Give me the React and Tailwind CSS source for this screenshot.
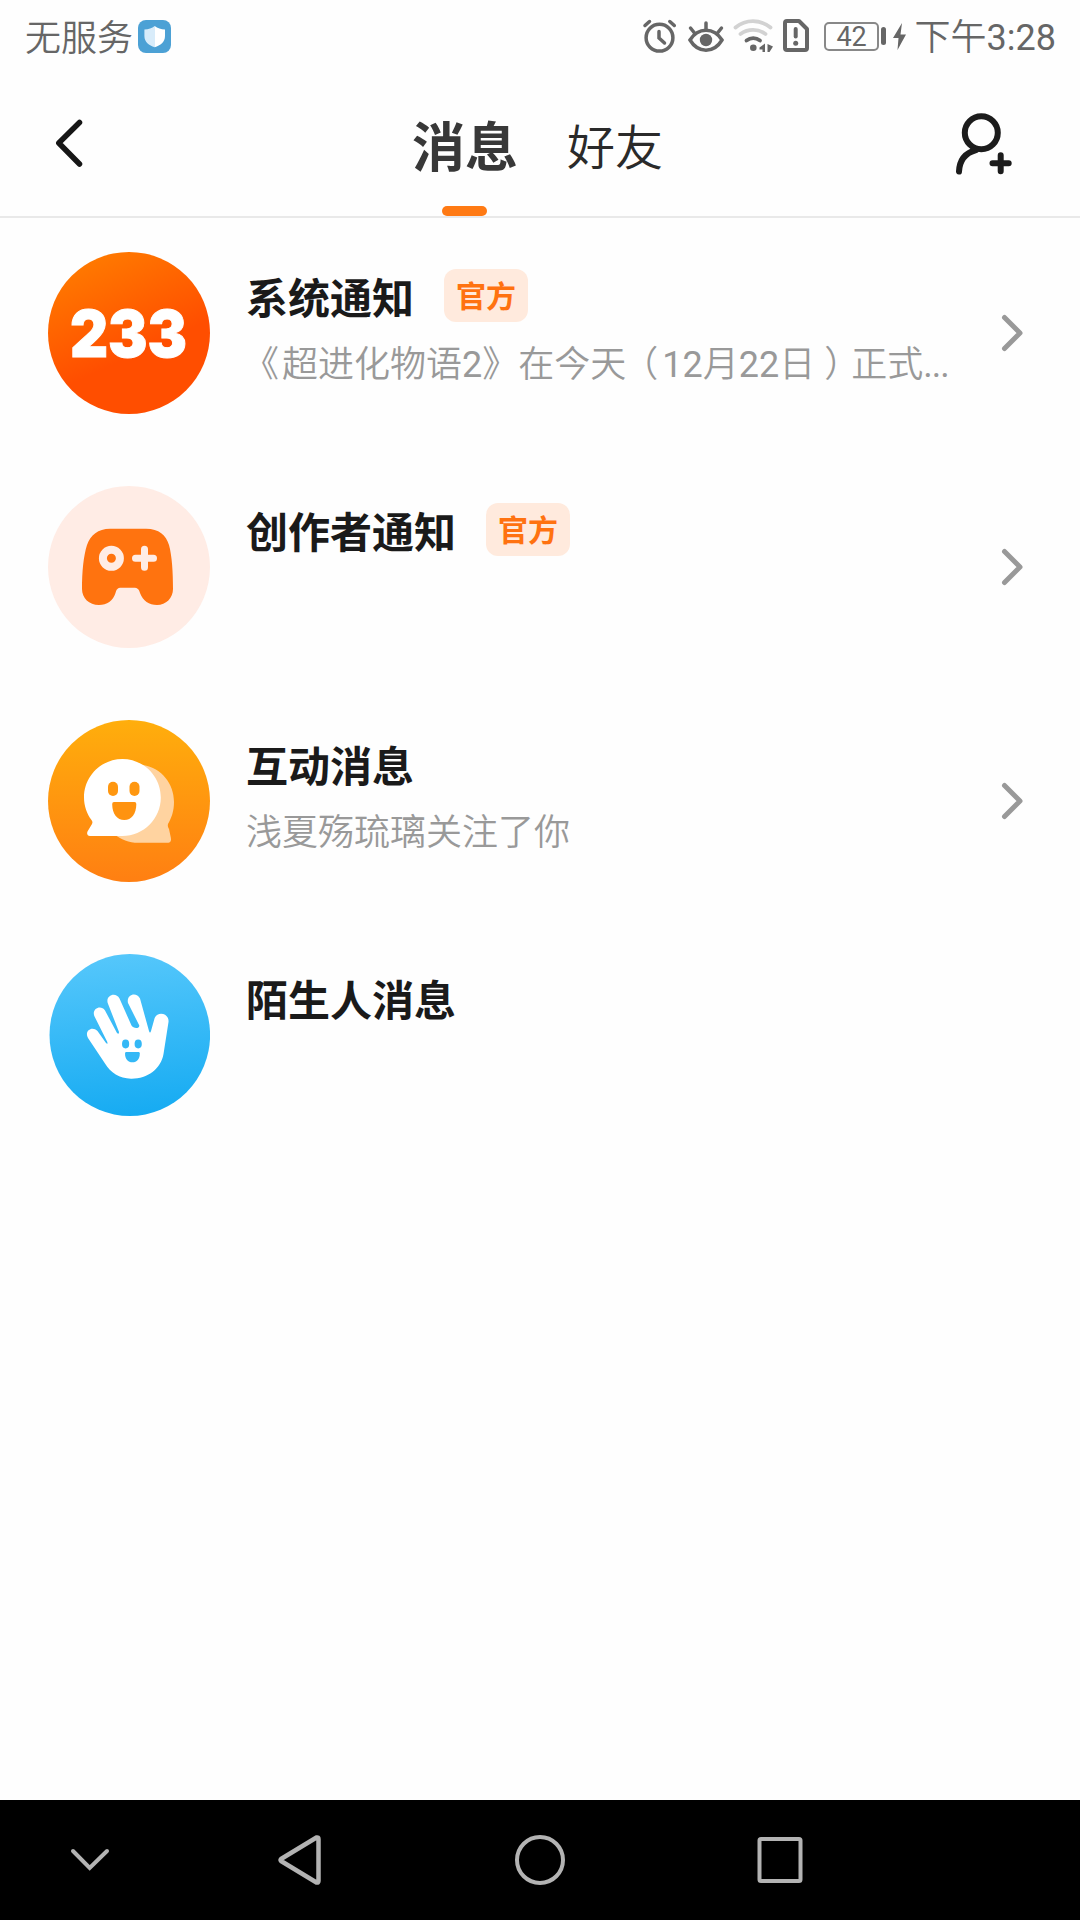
const avatars = {
  system: SystemAvatar,
  creator: CreatorAvatar,
  interact: InteractAvatar,
  stranger: StrangerAvatar,
};

const messages = [
  {
    id: "system",
    title: "系统通知",
    official: true,
    preview: (
      <>
        <Bracket className="ml-[15px] mr-[3px]">《</Bracket>超进化物语<Digits>2</Digits>》在今天
        <Bracket className="ml-[14px] mr-[4px]">（</Bracket>
        <Digits>12</Digits>月<Digits>22</Digits>日
        <Bracket className="mx-[9px]">）</Bracket>正式
        <span className="font-normal tracking-[-1px]">...</span>
      </>
    ),
    arrow: true,
  },
  { id: "creator", title: "创作者通知", official: true, arrow: true },
  { id: "interact", title: "互动消息", preview: "浅夏殇琉璃关注了你", arrow: true },
  { id: "stranger", title: "陌生人消息" },
];

function Digits({ children }) {
  return <span className="font-normal">{children}</span>;
}

// half-width glyph, the rest of the full-width cell comes from the margins
function Bracket({ className, children }) {
  return <span className={`[font-feature-settings:'halt'] ${className}`}>{children}</span>;
}

function SystemAvatar() {
  return (
    <svg viewBox="0 0 162 162" className="size-[162px] shrink-0" aria-hidden>
      <defs>
        <linearGradient id="system-bg" x1="0.2" y1="0" x2="0.5" y2="0.65">
          <stop offset="0" stopColor="#ff7d00" />
          <stop offset="1" stopColor="#ff4e00" />
        </linearGradient>
      </defs>
      <circle cx="81" cy="81" r="81" fill="url(#system-bg)" />
      <text
        x="22"
        y="104.5"
        fill="#fff"
        stroke="#fff"
        strokeWidth="1"
        fontSize="65"
        textLength="117"
        lengthAdjust="spacingAndGlyphs"
        className="font-['Inter',sans-serif] font-black"
      >
        233
      </text>
    </svg>
  );
}

function CreatorAvatar() {
  return (
    <svg viewBox="0 0 162 162" className="size-[162px] shrink-0" aria-hidden>
      <circle cx="81" cy="81" r="81" fill="#ffece5" />
      <path
        d="M62 42.7H98C111 42.7 118 49 121 59C124 70 125 86 125 103C125 112 118 119 109 119C101 119 95 115 92 107C91 103 89 101.7 86 101.7H73C70 101.7 68.5 103 67.5 107C65 115 59 119 51 119C41 119 34 112 34 103C34 86 35.5 70 39 59C42.5 49 50 42.7 62 42.7Z"
        fill="#ff730f"
      />
      <circle cx="63.4" cy="72.3" r="8.5" fill="none" stroke="#ffece5" strokeWidth="8" />
      <path d="M87.5 72.3H105.5M96.5 63.3V81.3" stroke="#ffece5" strokeWidth="7" strokeLinecap="round" />
    </svg>
  );
}

function InteractAvatar() {
  return (
    <svg viewBox="0 0 162 162" className="size-[162px] shrink-0" aria-hidden>
      <defs>
        <linearGradient id="interact-bg" x1="0" y1="0" x2="0" y2="1">
          <stop offset="0" stopColor="#ffae0c" />
          <stop offset="1" stopColor="#ff7f12" />
        </linearGradient>
      </defs>
      <circle cx="81" cy="81" r="81" fill="url(#interact-bg)" />
      <path
        d="M95 45C114 48 126 64 126 82C126 91 123.5 98 120 104C119.5 106 120 107 121 109L122.8 117.5C123.5 121 122.5 122.8 119.5 122.8H90C81 122.8 73 119.5 66 114Z"
        fill="#ffd3a0"
      />
      <path
        d="M74.4 39C95.6 39 112.8 56.2 112.8 77.5C112.8 98.8 95.6 116 74.4 116H42C39.5 116 38.5 114 39.5 111.5L44 104C44.7 102.5 44.6 101.6 43.5 100C39 94 36 86 36 77.5C36 56.2 53.2 39 74.4 39Z"
        fill="#fff"
      />
      <rect x="60" y="61.7" width="10" height="14.3" rx="5" fill="#ff9710" />
      <rect x="81.5" y="61.7" width="10" height="14.3" rx="5" fill="#ff9710" />
      <path d="M66 82H86.5Q88.3 82 88.3 84C88.3 94 83.5 100 76.3 100C69 100 64.2 94 64.2 84Q64.2 82 66 82Z" fill="#ff9310" />
    </svg>
  );
}

function StrangerAvatar() {
  return (
    <svg viewBox="0 0 162 162" className="size-[162px] shrink-0" aria-hidden>
      <defs>
        <linearGradient id="stranger-bg" x1="0.45" y1="0" x2="0.55" y2="1">
          <stop offset="0" stopColor="#55c7fb" />
          <stop offset="1" stopColor="#16abf2" />
        </linearGradient>
      </defs>
      <ellipse cx="81.8" cy="81" rx="80.3" ry="81" fill="url(#stranger-bg)" />
      <path
        d="M40 84C36 77 44 71.5 49.5 77L58 89Q60 91 59.3 88L46.3 62C43.5 54.5 53 50.5 57 56.5L69 79Q71 81 71 78L59.7 49C57.5 41 68 37.5 71.5 44.5L83.5 71.5C85 74.5 91.5 75 91.3 71.5L80 49C78 40.5 88.5 37.5 92 44.5L101 77Q102 80 103 77L106.5 64.5C109.5 56.5 121.5 59.5 120.5 68L115.5 100C113 115 99 125 83 124.7C71.5 124.5 62.5 118.5 57 109.5Z"
        fill="#fff"
      />
      <ellipse cx="77.6" cy="90" rx="3.6" ry="4.4" fill="#34b8f6" />
      <ellipse cx="90.2" cy="90" rx="3.6" ry="4.4" fill="#34b8f6" />
      <path d="M78 98H90.8Q91.8 98 91.8 99.5C91.8 105 88.8 108.3 84.4 108.3C80 108.3 77 105 77 99.5Q77 98 78 98Z" fill="#34b8f6" />
    </svg>
  );
}

function StatusBar() {
  return (
    <div className="flex h-[72px] items-center justify-between pl-[25px] pr-[24px] text-[36px] leading-none text-[#666]">
      <div className="flex items-center gap-[5px]">
        <span className="pt-[5px] font-[350]">无服务</span>
        <svg viewBox="138 0 33 72" className="h-[72px] w-[33px]" aria-hidden>
          <defs>
            <linearGradient id="guard" x1="0" y1="0" x2="1" y2="0">
              <stop offset="0.5" stopColor="#d8ecfa" />
              <stop offset="0.5" stopColor="#fff" />
            </linearGradient>
          </defs>
          <rect x="138" y="20" width="33" height="33" rx="8" fill="#4ca1d5" />
          <path d="M154.7 26C157.5 28.4 161 29.3 165 29.4V36C165 42 160.5 45.5 154.7 47.2C149 45.5 144.4 42 144.4 36V29.4C148.5 29.3 152 28.4 154.7 26Z" fill="url(#guard)" />
        </svg>
      </div>

      <div className="flex items-center">
        {/* alarm */}
        <svg viewBox="642 0 36 72" className="h-[72px] w-[36px]" fill="none" stroke="#666" strokeWidth="3.5" strokeLinecap="round" aria-hidden>
          <circle cx="659.5" cy="37.7" r="13.4" />
          <path d="M659 31.5V38L664.5 43M645 25.5L649.5 21.5M674.3 25.5L669.8 21.5" />
        </svg>
        {/* eye comfort */}
        <svg viewBox="686 0 40 72" className="ml-[8px] h-[72px] w-[40px]" fill="none" stroke="#666" strokeWidth="3.5" strokeLinecap="round" aria-hidden>
          <path d="M690 40C698 27 714 27 722 40C714 53.5 698 53.5 690 40Z" />
          <path d="M706 23V29M690.5 28L694.5 33M721.5 28L717.5 33" />
          <circle cx="706" cy="40" r="6.2" fill="#666" stroke="none" />
        </svg>
        {/* wifi */}
        <svg viewBox="732 0 42 72" className="ml-[6px] h-[72px] w-[42px]" fill="none" strokeWidth="3.8" strokeLinecap="round" aria-hidden>
          <path d="M735.5 27.5C746 19 760 19 770.5 27.5" stroke="#d2d2d2" />
          <path d="M740.5 34C748 28.5 758 28.5 765.5 34" stroke="#d2d2d2" />
          <path d="M746.5 40.5C750.5 37.5 756 37.5 760 40.5" stroke="#666" />
          <circle cx="753.3" cy="47.8" r="3.3" fill="#666" />
          <path d="M765 43.5V52H762.5V49.5H759.5V47.5ZM767.5 44L773 46.5L769.500 52H767.5Z" fill="#666" />
        </svg>
        {/* sim alert */}
        <svg viewBox="782 0 28 72" className="ml-[8px] h-[72px] w-[28px]" fill="none" stroke="#666" strokeWidth="4" strokeLinejoin="round" strokeLinecap="round" aria-hidden>
          <path d="M787 21H799L807 29V48Q807 50 805 50H787Q785 50 785 48V23Q785 21 787 21Z" />
          <path d="M795.7 29V36.5" />
          <circle cx="795.7" cy="43.3" r="2.5" fill="#666" stroke="none" />
        </svg>
        <div className="ml-[14px] mt-px flex h-[29px] w-[55px] items-center justify-center rounded-[5px] border-2 border-[#888] pl-px pt-px text-[27px]">
          42
        </div>
        <div className="ml-[2px] h-[18px] w-[5px] rounded-full bg-[#666]" />
        <svg viewBox="892 0 15 72" className="ml-[6px] h-[72px] w-[15px]" fill="#666" aria-hidden>
          <path d="M902 23L893 38H898.5L897.5 50L906 34.5H900.5Z" />
        </svg>
        <span className="ml-[8px] flex items-center pt-[4px]">
          <span className="font-[350]">下午</span>3:28
        </span>
      </div>
    </div>
  );
}

function Header() {
  return (
    <header className="flex h-[144px] items-start justify-between pl-[54px] pr-[66px] shadow-[0_2px_0_#e9e9e9]">
      <svg viewBox="54 72 32 144" className="h-[144px] w-[32px]" fill="none" stroke="#161616" strokeWidth="5.5" strokeLinecap="round" strokeLinejoin="round" aria-label="返回">
        <path d="M79.5 122.5L58.8 143L79.5 164" />
      </svg>
      <nav className="ml-[35px] flex h-full leading-none">
        <div className="flex w-[106px] flex-col items-center justify-between pt-[51px] text-[53px] font-bold text-[#383838]">
          <span>消息</span>
          <span className="h-[10px] w-[45px] rounded-full bg-[#ff7a14]" />
        </div>
        <span className="ml-[49px] pt-[53px] text-[48px] font-[350] text-[#2a2a2a]">好友</span>
      </nav>
      <svg viewBox="954 72 60 144" className="h-[144px] w-[60px]" fill="none" stroke="#1c1c1c" strokeWidth="6" strokeLinecap="round" aria-label="添加好友">
        <circle cx="981.3" cy="132.7" r="16.5" />
        <path d="M976 150C965 153 959.5 161 959 171.5M1000.7 155.3V171.3M992.5 163.3H1008.7" />
      </svg>
    </header>
  );
}

function MessageRow({ message }) {
  const Avatar = avatars[message.id];
  return (
    <li className="flex h-[234px] items-center pl-[48px] pr-[54px]">
      <Avatar />
      <div className="ml-[36px] flex h-[162px] min-w-0 flex-1 flex-col pt-[17px]">
        <div className="flex h-[53px] items-center gap-[30px]">
          <h2 className="pt-[8px] text-[42px] leading-none font-bold text-[#1a1a1a]">{message.title}</h2>
          {message.official ? (
            <span className="flex h-[53px] w-[84px] items-center justify-center rounded-[12px] bg-[#ffeadd] pt-[2px] text-[30px] leading-none font-bold text-[#ff7210]">
              官方
            </span>
          ) : null}
        </div>
        {message.preview ? (
          <p className="mt-[19px] text-[36px] leading-[48px] font-[350] whitespace-nowrap text-[#999]">{message.preview}</p>
        ) : null}
      </div>
      {message.arrow ? (
        <svg viewBox="0 0 26 40" className="h-[40px] w-[26px] shrink-0" fill="none" stroke="#999" strokeWidth="5" strokeLinecap="round" strokeLinejoin="round" aria-hidden>
          <path d="M4.5 4.5L20 20L4.5 35.5" />
        </svg>
      ) : null}
    </li>
  );
}

function NavBar() {
  return (
    <footer className="flex h-[120px] items-center bg-black pl-[66px]">
      <svg viewBox="0 0 48 60" className="h-[60px] w-[48px]" fill="none" stroke="#b3b3b3" strokeWidth="4" strokeLinecap="round" aria-hidden>
        <path d="M7 21L23.7 38L41 21" />
      </svg>
      <svg viewBox="0 0 60 60" className="ml-[156px] size-[60px]" fill="none" stroke="#b3b3b3" strokeWidth="4.5" strokeLinejoin="round" aria-hidden>
        <path d="M46.500 7.500Q48.500 7 48.500 9V51Q48.500 53 46.500 52.500L11 31Q10 30 11 29Z" />
      </svg>
      <svg viewBox="0 0 60 60" className="ml-[180px] size-[60px]" fill="none" stroke="#b3b3b3" strokeWidth="4" aria-hidden>
        <circle cx="30" cy="30" r="23" />
      </svg>
      <svg viewBox="0 0 60 60" className="ml-[180px] size-[60px]" fill="none" stroke="#b3b3b3" strokeWidth="4" aria-hidden>
        <rect x="9.5" y="9" width="41" height="42" rx="1.5" />
      </svg>
    </footer>
  );
}

export default function App() {
  return (
    <div className="flex h-[1920px] w-[1080px] flex-col overflow-hidden bg-[#fefefe] font-['Roboto','Noto_Sans_CJK_SC',sans-serif]">
      <StatusBar />
      <Header />
      <ul className="flex-1">
        {messages.map((message) => (
          <MessageRow key={message.id} message={message} />
        ))}
      </ul>
      <NavBar />
    </div>
  );
}
